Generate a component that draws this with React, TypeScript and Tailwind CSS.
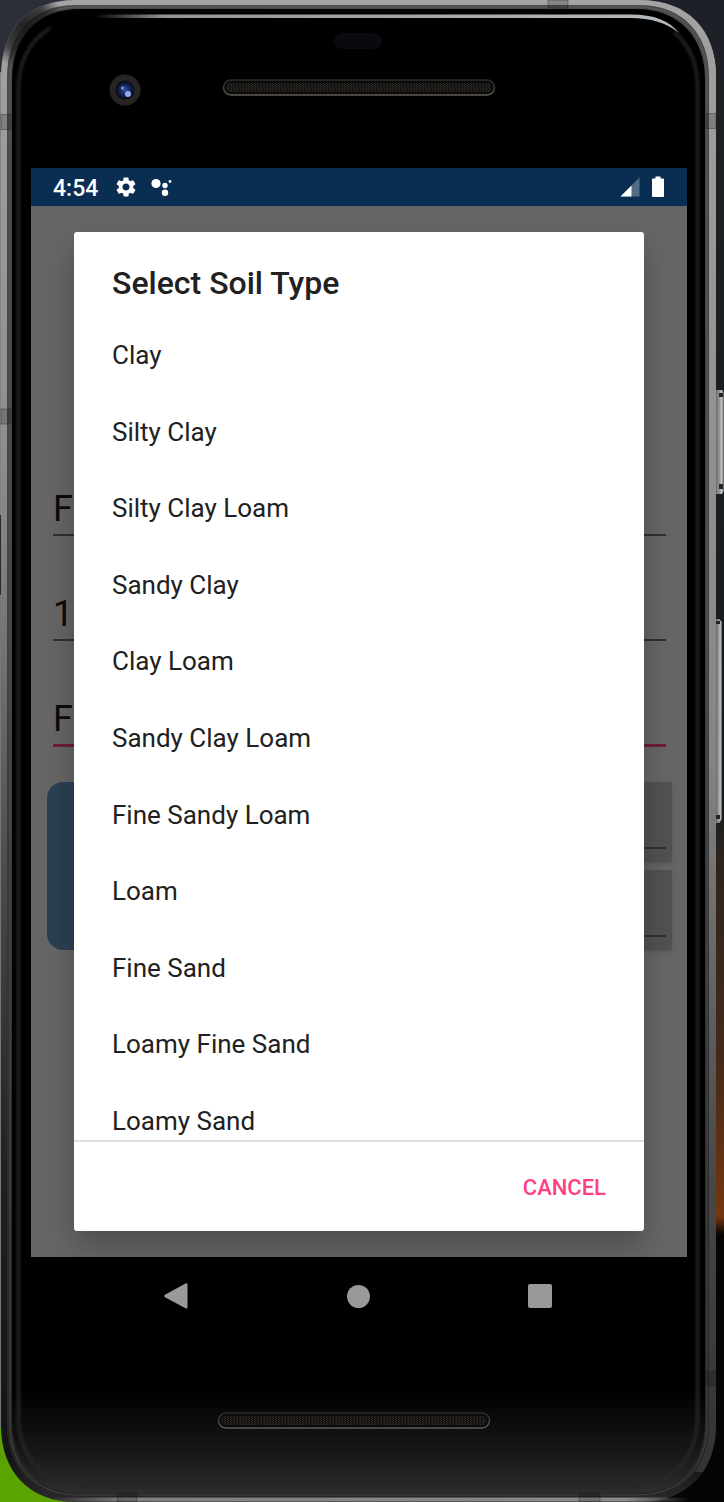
import React from "react";

const soilTypes = [
  "Clay",
  "Silty Clay",
  "Silty Clay Loam",
  "Sandy Clay",
  "Clay Loam",
  "Sandy Clay Loam",
  "Fine Sandy Loam",
  "Loam",
  "Fine Sand",
  "Loamy Fine Sand",
  "Loamy Sand",
];

function Speaker({ x, y }: { x: number; y: number }) {
  return (
    <g>
      <rect x={x + 1.5} y={y + 1} width="271" height="15" rx="7.5" fill="#0b0b0b" stroke="url(#speakerRim)" strokeWidth="1.4" />
      <rect x={x + 4.5} y={y + 4} width="265" height="9" rx="4.5" fill="url(#mesh)" />
    </g>
  );
}

/* Device body, drawn behind the screen. */
function DeviceBody() {
  return (
    <svg
      aria-hidden="true"
      className="absolute inset-0 h-full w-full"
      viewBox="0 0 724 1502"
      preserveAspectRatio="none"
    >
      <defs>
        <linearGradient id="wall" x1="0" y1="0" x2="0" y2="1">
          <stop offset="0" stopColor="#1d2127" />
          <stop offset="0.53" stopColor="#161b1d" />
          <stop offset="0.57" stopColor="#2c241d" />
          <stop offset="0.7" stopColor="#43291a" />
          <stop offset="0.81" stopColor="#743710" />
          <stop offset="0.822" stopColor="#060504" />
          <stop offset="1" stopColor="#050505" />
        </linearGradient>
        <linearGradient id="metal" x1="0" y1="0" x2="0" y2="1">
          <stop offset="0" stopColor="#a3a3a3" />
          <stop offset="0.3" stopColor="#8e8e8e" />
          <stop offset="0.43" stopColor="#747474" />
          <stop offset="0.6" stopColor="#474747" />
          <stop offset="0.78" stopColor="#202020" />
          <stop offset="0.97" stopColor="#141414" />
          <stop offset="1" stopColor="#2a2a2a" />
        </linearGradient>
        <linearGradient id="metalRight" x1="0" y1="0" x2="0" y2="1">
          <stop offset="0" stopColor="#a0a0a0" />
          <stop offset="0.5" stopColor="#858585" />
          <stop offset="0.8" stopColor="#474747" />
          <stop offset="1" stopColor="#333333" />
        </linearGradient>
        <linearGradient id="groove" x1="0" y1="0" x2="0" y2="1">
          <stop offset="0" stopColor="#4a4a4a" />
          <stop offset="0.4" stopColor="#434343" />
          <stop offset="0.8" stopColor="#2c2c2c" />
          <stop offset="1" stopColor="#262626" />
        </linearGradient>
        <linearGradient id="chin" x1="0" y1="0" x2="0" y2="1">
          <stop offset="0" stopColor="#000" />
          <stop offset="0.93" stopColor="#000" />
          <stop offset="0.975" stopColor="#191919" />
          <stop offset="1" stopColor="#2e2e2e" />
        </linearGradient>
        <linearGradient id="glint" x1="0" y1="0" x2="1" y2="0">
          <stop offset="0" stopColor="#999" stopOpacity="0" />
          <stop offset="0.12" stopColor="#92979b" />
          <stop offset="1" stopColor="#b4babd" />
        </linearGradient>
        <linearGradient id="bottomRail" gradientUnits="userSpaceOnUse" x1="50" y1="0" x2="690" y2="0">
          <stop offset="0" stopColor="#808080" stopOpacity="0" />
          <stop offset="0.12" stopColor="#808080" />
          <stop offset="0.9" stopColor="#8a8a8a" />
          <stop offset="1" stopColor="#808080" stopOpacity="0" />
        </linearGradient>
        <radialGradient id="cornerShade" gradientUnits="userSpaceOnUse" cx="22" cy="25" r="42">
          <stop offset="0" stopColor="#151515" stopOpacity="0.9" />
          <stop offset="0.6" stopColor="#151515" stopOpacity="0.7" />
          <stop offset="1" stopColor="#151515" stopOpacity="0" />
        </radialGradient>
        <linearGradient id="speakerRim" x1="0" y1="0" x2="0" y2="1">
          <stop offset="0" stopColor="#2a2a2a" />
          <stop offset="1" stopColor="#5f5b57" />
        </linearGradient>
        <linearGradient id="sideButton" x1="0" y1="0" x2="1" y2="0">
          <stop offset="0" stopColor="#6c6c6c" />
          <stop offset="0.5" stopColor="#9b9b9b" />
          <stop offset="0.7" stopColor="#c8c8c8" />
          <stop offset="1" stopColor="#555" />
        </linearGradient>
        <radialGradient id="lens">
          <stop offset="0" stopColor="#3550a4" />
          <stop offset="0.6" stopColor="#14214f" />
          <stop offset="1" stopColor="#07080f" />
        </radialGradient>
        <pattern id="mesh" width="3" height="2" patternUnits="userSpaceOnUse">
          <rect width="3" height="2" fill="#12110f" />
          <rect width="1" height="1" fill="#38332c" />
          <rect x="2" y="1" width="1" height="1" fill="#2a2622" />
        </pattern>
        <filter id="soft" filterUnits="userSpaceOnUse" x="0" y="0" width="724" height="1502">
          <feGaussianBlur stdDeviation="1.6" />
        </filter>
      </defs>

      <rect width="724" height="1502" fill="url(#wall)" />
      <rect width="100" height="100" fill="#2c2f38" />
      <rect y="72" width="3" height="443" fill="#7f8585" />
      <rect y="515" width="3" height="80" fill="#2b2b2b" />
      <rect y="595" width="3" height="833" fill="#747878" />
      <rect y="1428" width="90" height="74" fill="#5ba300" />

      <path d="M716 390h6l2 3v98l-2 3h-6z" fill="url(#sideButton)" />
      <path d="M719 393h4v4h-4zM719 484h4v5h-4z" fill="#242424" />
      <path d="M716 619h3l3 3v197l-3 4h-3z" fill="url(#sideButton)" />
      <path d="M716 621h4v3h-4zM716 815h4v4h-4z" fill="#242424" />

      <path
        d="M75 0H640C688 0 716 30 716 76V1426C716 1470 688 1502 640 1502H75C28 1502 1 1470 1 1426V76C1 30 28 0 75 0Z"
        fill="url(#metal)"
      />
      <path d="M701 30C711 42 716 58 716 76V1426C716 1444 711 1460 703 1472H690V30Z" fill="url(#metalRight)" />
      <path
        d="M76 5H639C682 5 709 33 709 77V1425C709 1467 683 1497 639 1497H76C33 1497 7 1467 7 1425V77C7 33 33 5 76 5Z"
        fill="url(#groove)"
      />
      <path d="M50 1499.500H690" stroke="url(#bottomRail)" strokeWidth="4" />
      <path
        d="M78 7H638C681 7 707 35 707 78V1424C707 1466 681 1495 638 1495H78C35 1495 10 1465 10 1424V78C10 35 35 7 78 7Z"
        fill="none"
        stroke="#858585"
        strokeOpacity="0.3"
        strokeWidth="1"
      />
      <path
        d="M75 0H640C688 0 716 30 716 76V1426C716 1470 688 1502 640 1502H75C28 1502 1 1470 1 1426V76C1 30 28 0 75 0Z"
        fill="url(#cornerShade)"
      />
      <path
        d="M80 9H636C679 9 705 37 705 80V1422C705 1464 679 1493 636 1493H80C37 1493 12 1463 12 1422V80C12 37 37 9 80 9Z"
        fill="url(#chin)"
      />
      <path
        d="M50 28C28 42 18.500 62 18.500 90V1415C18.500 1457 42 1483 82 1485H634C674 1484 697.500 1457 697.500 1415V90C697.500 62 690 46 674 32"
        fill="none"
        stroke="#262626"
        strokeWidth="3"
        filter="url(#soft)"
      />
      <path d="M94 14.500H630Q664 14 679 33Q661 18 630 18H94Z" fill="url(#glint)" />

      <g fill="#000" fillOpacity="0.18" stroke="#222" strokeOpacity="0.4" strokeWidth="1">
        <rect x="1" y="114.500" width="10" height="15" />
        <rect x="1" y="409" width="10" height="15" />
        <rect x="706" y="113.500" width="10" height="15" />
        <rect x="706" y="1371" width="10" height="15" />
        <rect x="548" y="0" width="20" height="8" />
        <rect x="117" y="1493" width="20" height="9" />
        <rect x="579" y="1493" width="21" height="9" />
      </g>

      <rect x="334" y="33" width="48" height="16" rx="8" fill="#090a0e" />
      <circle cx="125" cy="90" r="15.500" fill="#272524" />
      <circle cx="125" cy="90" r="9.500" fill="url(#lens)" />
      <circle cx="128" cy="94" r="3" fill="#94a8f5" />
      <circle cx="122.500" cy="88" r="1.700" fill="#6d87d8" />
      <Speaker x={222} y={79} />
      <Speaker x={217} y={1412} />
    </svg>
  );
}

function StatusBar() {
  return (
    <header className="flex h-[38px] items-center bg-[#0a2e52] pl-[22px] pr-[23px] text-white">
      <span className="pt-0.5 text-[23px] font-medium leading-none">4:54</span>
      <svg aria-hidden="true" className="ml-4 size-6" viewBox="0 0 24 24" fill="currentColor">
        <path d="M19.140 12.940c.040-.300.060-.610.060-.940 0-.320-.020-.640-.070-.940l2.030-1.580a.490.490 0 0 0 .120-.610l-1.920-3.320a.488.488 0 0 0-.590-.220l-2.390.960c-.500-.380-1.030-.700-1.620-.940l-.360-2.540a.484.484 0 0 0-.480-.410h-3.840c-.240 0-.430.170-.470.410l-.360 2.540c-.590.240-1.130.570-1.620.940l-2.390-.960c-.220-.080-.470 0-.590.220L2.740 8.870c-.120.210-.080.470.120.610l2.030 1.580c-.050.300-.090.630-.090.940s.020.640.070.940l-2.030 1.580a.490.490 0 0 0-.120.610l1.920 3.320c.120.220.370.290.590.220l2.390-.960c.500.380 1.030.700 1.620.940l.360 2.540c.050.240.240.410.480.410h3.840c.240 0 .440-.170.470-.410l.360-2.540c.590-.240 1.130-.560 1.620-.940l2.390.960c.220.080.470 0 .590-.220l1.920-3.320c.120-.220.070-.470-.120-.610l-2.010-1.580zM12 15.600c-1.980 0-3.600-1.620-3.600-3.600s1.620-3.600 3.600-3.600 3.600 1.620 3.600 3.600-1.620 3.600-3.600 3.600z" />
      </svg>
      <svg aria-hidden="true" className="ml-3 h-6 w-6" viewBox="0 0 24 24" fill="currentColor">
        <circle cx="6" cy="8.500" r="4.600" />
        <circle cx="15" cy="10.500" r="2.700" />
        <circle cx="15" cy="17.800" r="3.200" />
        <circle cx="20" cy="6.500" r="1.400" />
      </svg>
      <svg aria-hidden="true" className="ml-auto h-[22px] w-5" viewBox="0 0 20 22" fill="currentColor">
        <path d="M19.500 1.500V20.500H0.500Z" fillOpacity="0.300" />
        <path d="M11.500 9.500V20.500H0.500Z" />
      </svg>
      <svg aria-hidden="true" className="ml-3 h-[22px] w-3" viewBox="0 0 12 22" fill="currentColor">
        <path d="M3.500 0.500H8.500V2.500H11.200A0.800 0.800 0 0 1 12 3.300V20.200A0.800 0.800 0 0 1 11.200 21H0.800A0.800 0.800 0 0 1 0 20.200V3.300A0.800 0.800 0 0 1 0.800 2.500H3.500Z" />
      </svg>
    </header>
  );
}

/* The form under the dialog's scrim. */
function DimmedForm() {
  return (
    <div inert className="col-start-1 row-start-1 flex flex-col bg-[#666666] pt-[276px]">
      <div className="flex flex-col gap-[51px] pl-[22px] pr-[21px]">
        <input
          aria-label="Field name"
          className="block h-[54px] w-full border-b-2 border-[#303030] bg-transparent pt-0.5 text-[36px] leading-none text-[#0b0b0b] outline-none"
          defaultValue="F"
        />
        <input
          aria-label="Field size"
          className="block h-[54px] w-full border-b-2 border-[#303030] bg-transparent pt-0.5 text-[36px] leading-none text-[#0b0b0b] outline-none"
          defaultValue="1"
        />
        <input
          aria-label="Soil type"
          className="block h-[55px] w-full border-b-3 border-[#6f1d3b] bg-transparent pt-0.5 text-[36px] leading-none text-[#0b0b0b] outline-none"
          defaultValue="F"
        />
      </div>
      <div className="mt-[35px] flex gap-4 pl-4 pr-[15px]">
        <button type="button" aria-label="Choose location" className="h-[168px] flex-1 rounded-2xl bg-[#2c4054]" />
        <div className="flex flex-1 flex-col gap-2">
          <div className="h-20 bg-[#525252] pr-1.5 pt-[65px] shadow-[0_2px_4px_rgba(0,0,0,0.15)]">
            <div className="h-0.5 bg-[#303030]" />
          </div>
          <div className="h-20 bg-[#525252] pr-1.5 pt-[65px] shadow-[0_2px_4px_rgba(0,0,0,0.15)]">
            <div className="h-0.5 bg-[#303030]" />
          </div>
        </div>
      </div>
    </div>
  );
}

function SoilDialog() {
  return (
    <div
      role="dialog"
      aria-labelledby="soil-title"
      className="z-10 col-start-1 row-start-1 mx-[43px] my-[26px] flex flex-col rounded-[3px] bg-white text-[#212121] shadow-[0_16px_32px_rgba(0,0,0,0.25)]"
    >
      <h1 id="soil-title" className="px-[38px] pb-[14px] pt-[31px] text-[32px] font-medium leading-10">
        Select Soil Type
      </h1>
      <div className="h-[823px] overflow-hidden">
        <ul className="grid h-[842px] auto-rows-fr">
          {soilTypes.map((soil) => (
            <li key={soil} className="flex">
              <button type="button" className="flex-1 px-[38px] text-left text-[26px] leading-8">
                {soil}
              </button>
            </li>
          ))}
        </ul>
      </div>
      <div className="flex h-[91px] items-center justify-end border-t-2 border-[#e0e0e0] pr-[25px] pt-0.5">
        <button type="button" className="px-[13px] py-3 text-[22px] font-medium leading-8 text-[#ff4081]">
          CANCEL
        </button>
      </div>
    </div>
  );
}

function NavBar() {
  return (
    <nav className="flex h-[78px] items-center pl-[54px] pr-[56px] text-[#999999]">
      <button type="button" aria-label="Back" className="flex flex-1 justify-center">
        <svg className="size-7" viewBox="0 0 28 28" fill="currentColor">
          <path d="M2.900 12.800L24 1.300Q25.500 0.800 25.500 2V25.500Q25.500 27 24 26.400L2.900 15.200Q1.600 14 2.900 12.800Z" />
        </svg>
      </button>
      <button type="button" aria-label="Home" className="flex flex-1 justify-center">
        <span className="size-[23px] rounded-full bg-current" />
      </button>
      <button type="button" aria-label="Overview" className="flex flex-1 justify-center">
        <span className="size-6 rounded-xs bg-current" />
      </button>
    </nav>
  );
}

export default function App() {
  return (
    <main className="relative min-h-screen overflow-hidden bg-[#050505] font-['Roboto',sans-serif]">
      <DeviceBody />
      <div className="relative pb-[167px] pl-[31px] pr-[37px] pt-[168px]">
        <StatusBar />
        <div className="grid overflow-hidden">
          <DimmedForm />
          <SoilDialog />
        </div>
        <NavBar />
      </div>
    </main>
  );
}
